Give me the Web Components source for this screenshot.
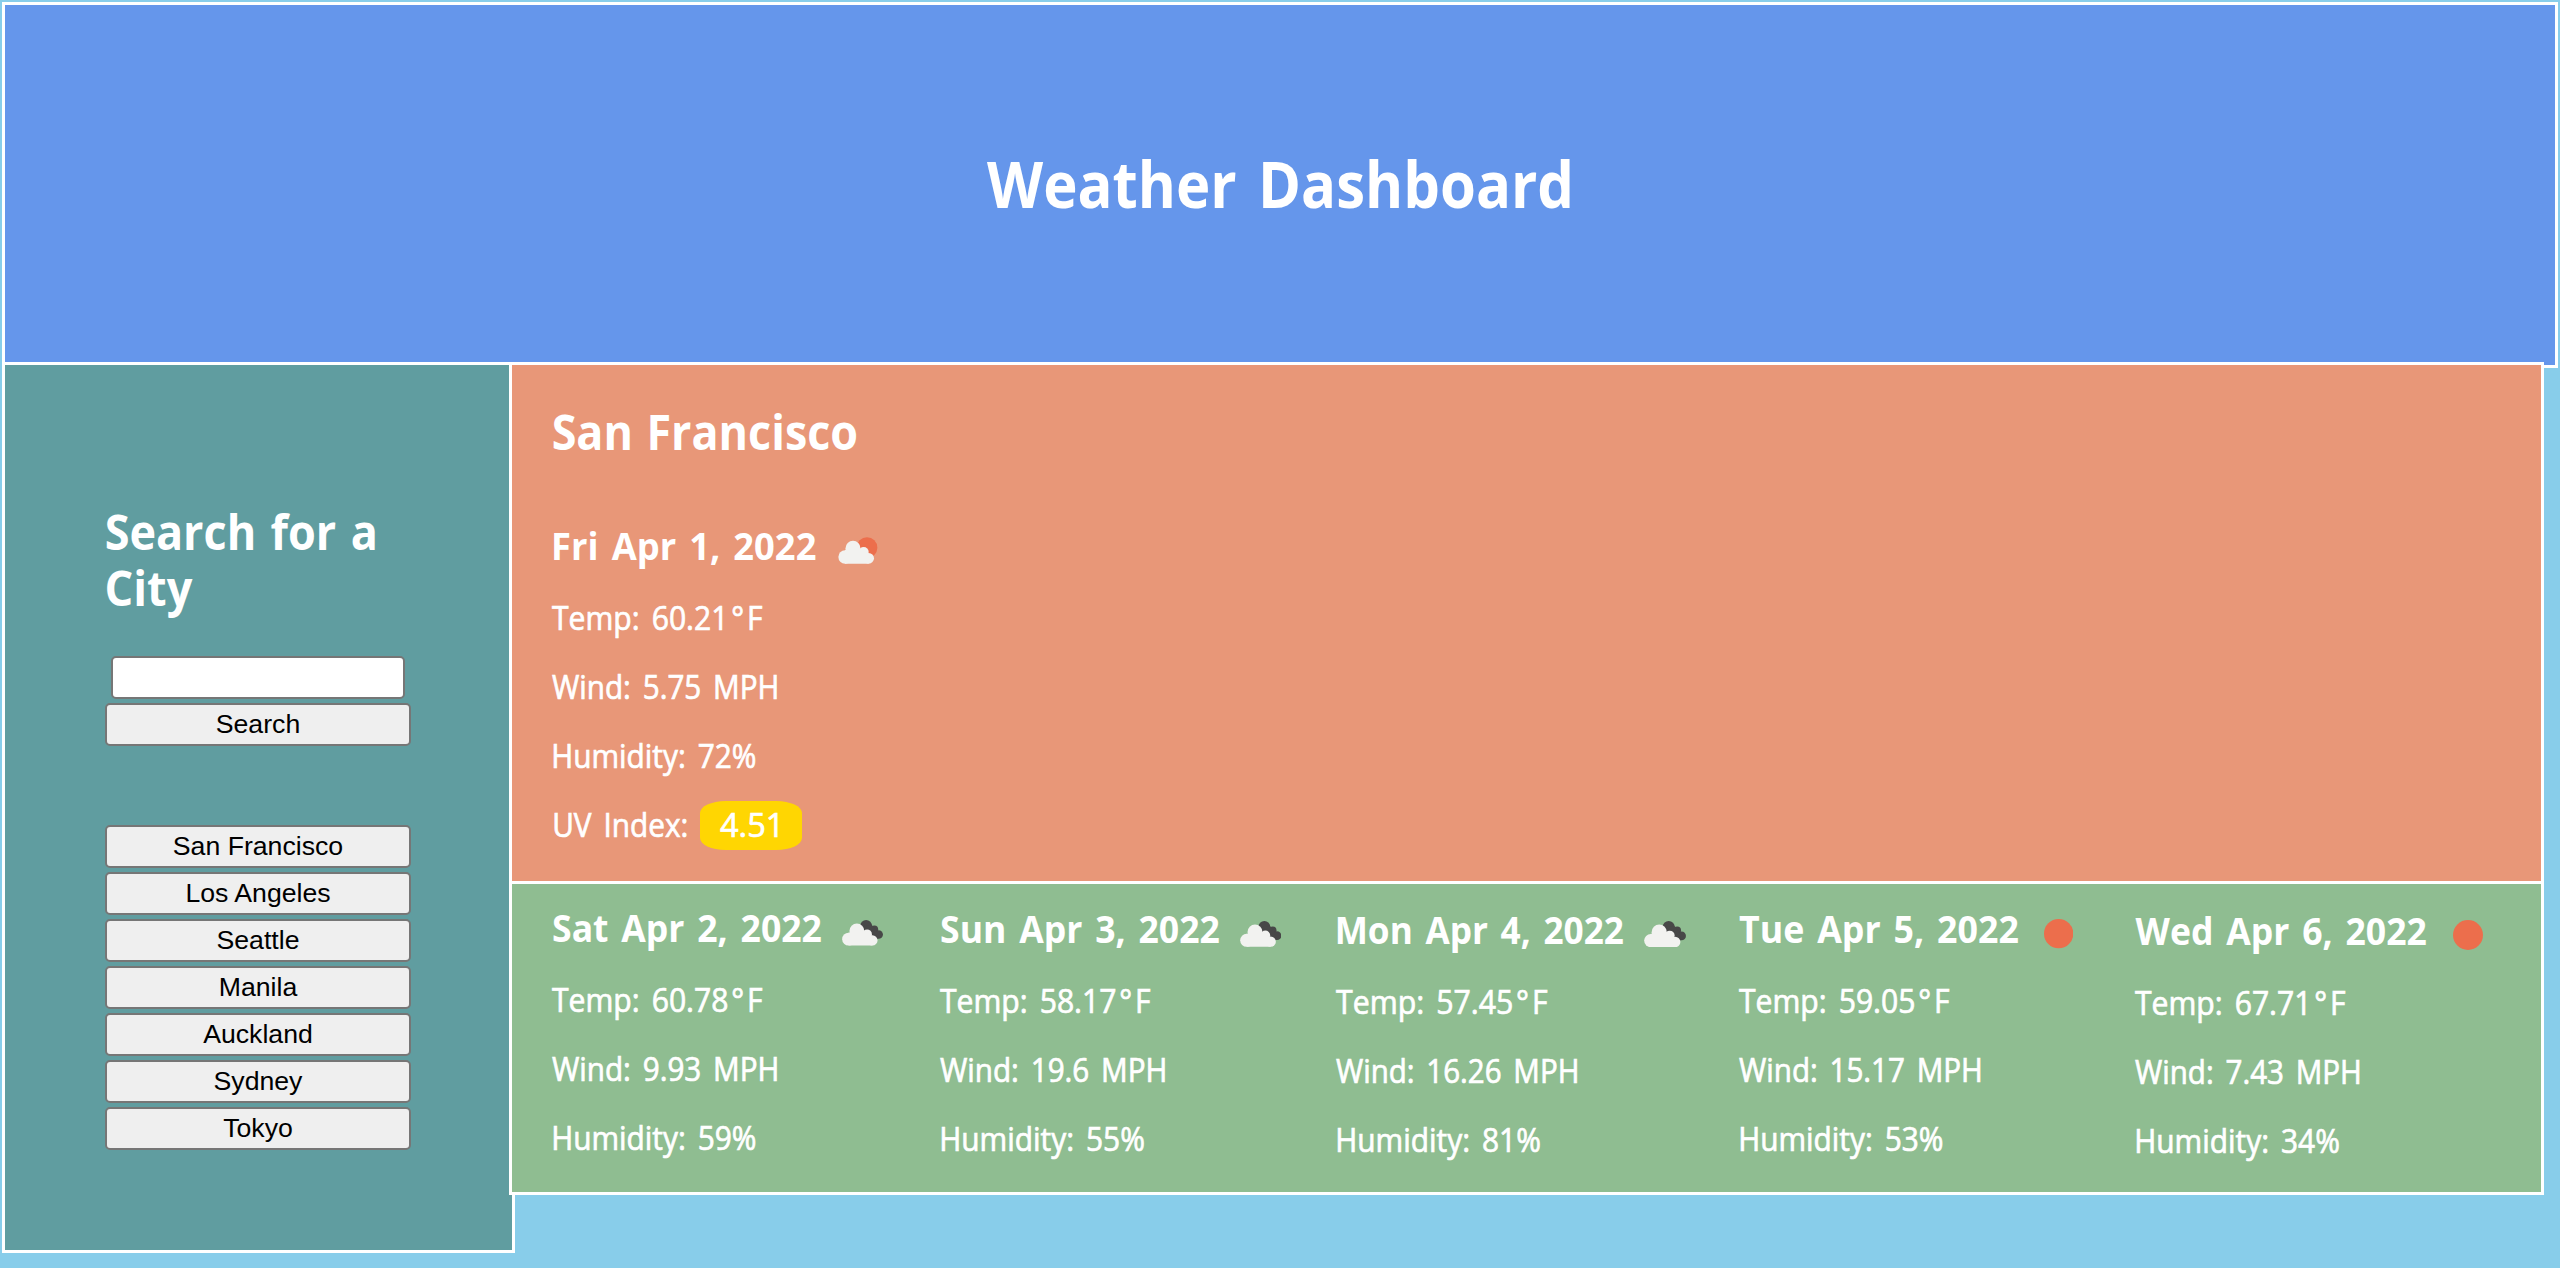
<!DOCTYPE html>
<html lang="en">
<head>
<meta charset="utf-8">
<title>Weather Dashboard</title>
<style>
html, body { margin: 0; }
body { background: #88cdea; padding: 2px; box-sizing: border-box; height: 1268px; overflow: hidden; color: #fff; font-family: "Open Sans", "Noto Sans", sans-serif; }
</style>
</head>
<body>
<weather-app></weather-app>
<script>
const shadow = (el, html) => { const r = el.attachShadow({ mode: 'open' }); r.innerHTML = html; return r; };
const pen = document.createElement('canvas').getContext('2d');

/* One line of text whose glyphs span exactly `ink` pixels, starting `lead` pixels in. */
class FitText extends HTMLElement {
  connectedCallback() {
    const r = shadow(this, `<style>
      :host { display: block; flex: none; white-space: nowrap; word-spacing: var(--gap, 0.11em); }
      span { display: block; width: max-content; transform-origin: 0 0; }
    </style><span><slot></slot></span>`);
    const cs = getComputedStyle(this), line = r.querySelector('span');
    pen.font = `${cs.fontWeight} ${cs.fontSize} ${cs.fontFamily}`;
    const m = pen.measureText(this.textContent);
    const bearings = m.width - m.actualBoundingBoxLeft - m.actualBoundingBoxRight;
    const ink = +this.getAttribute('ink'), lead = +(this.getAttribute('lead') || 0);
    const k = ink / (line.getBoundingClientRect().width - bearings);
    this.style.width = ink + lead + 'px';
    line.style.transform = `translateX(${lead + m.actualBoundingBoxLeft * k}px) scaleX(${k})`;
  }
}
customElements.define('fit-text', FitText);

class WeatherIcon extends HTMLElement {
  connectedCallback() {
    const w = this.getAttribute('width');
    const art = {
      partly: `<svg viewBox="54 50 119 81" width="${w}">
        <circle cx="141" cy="82" r="31" fill="#ec6e4c"/>
        <g fill="#f2f2f0"><circle cx="75" cy="110" r="20"/><circle cx="99" cy="84" r="22.5"/><circle cx="131" cy="95" r="15"/><circle cx="146" cy="114" r="16"/><path d="M75 130V88H122L146 100V130Z"/></g></svg>`,
      clouds: `<svg viewBox="48 46 125 78" width="${w}">
        <g fill="#484848"><circle cx="121" cy="64" r="18"/><circle cx="146" cy="74" r="11.5"/><circle cx="159" cy="90" r="13"/><path d="M115 64L137 60L150 76L158 103H120Z"/></g>
        <g fill="#f2f2f0"><circle cx="68" cy="104" r="19.5"/><circle cx="93" cy="79" r="22.5"/><circle cx="124" cy="89" r="14.5"/><circle cx="140" cy="108" r="15.5"/><path d="M68 123.5V84H115L140 94V123.5Z"/></g></svg>`,
      sun: `<svg viewBox="0 0 30 30" width="${w}"><circle cx="15" cy="15" r="15" fill="#ec6e4c"/></svg>`
    }[this.getAttribute('kind')];
    shadow(this, `<style>:host { display: block; flex: none; } svg { display: block; }</style>${art}`);
  }
}
customElements.define('weather-icon', WeatherIcon);

class DayReport extends HTMLElement {
  connectedCallback() {
    const d = JSON.parse(this.getAttribute('data'));
    shadow(this, `<style>
      :host { display: block; font-size: 32px; line-height: 69px; -webkit-text-stroke: 0.7px #fff; --gap: 0.14em; }
      .date { display: flex; align-items: flex-start; height: 51px; margin-bottom: 12px; font-size: 37.44px; line-height: 51px; font-weight: 700; -webkit-text-stroke: 0; --gap: 0.1em; }
      .degree { padding: 0 3px; }
      weather-icon { margin: ${d.icon[3]}px 0 0 ${d.icon[2]}px; }
    </style>
    <div class="date"><fit-text lead="${d.date[2]}" ink="${d.date[1]}">${d.date[0]}</fit-text><weather-icon kind="${d.icon[0]}" width="${d.icon[1]}"></weather-icon></div>
    ${d.rows.map(([t, ink, lead]) => `<fit-text lead="${lead}" ink="${ink}">${t.replace('°', '<span class="degree">°</span>')}</fit-text>`).join('')}
    <slot></slot>`);
  }
}
customElements.define('day-report', DayReport);

class UvIndex extends HTMLElement {
  connectedCallback() {
    shadow(this, `<style>
      :host { display: flex; align-items: flex-start; height: 69px; }
      .badge { box-sizing: border-box; width: 102px; height: 49px; margin: 11px 0 0 13px; padding-left: 20px; line-height: 47px; border-radius: 25%; background: #ffd602; }
    </style>
    <fit-text lead="2" ink="133">UV Index:</fit-text><div class="badge"><fit-text ink="58">4.51</fit-text></div>`);
  }
}
customElements.define('uv-index', UvIndex);

class AppHeader extends HTMLElement {
  connectedCallback() {
    shadow(this, `<style>
      :host { display: flex; justify-content: center; box-sizing: border-box; height: 366px; padding-top: 135px; border: 3px solid #fff; background: #6596eb; }
      h1 { margin: 0 3px 0 0; font-size: 64px; line-height: 87px; font-weight: 700; }
    </style><h1><fit-text ink="583">Weather Dashboard</fit-text></h1>`);
  }
}
customElements.define('app-header', AppHeader);

class CityButton extends HTMLElement {
  connectedCallback() {
    shadow(this, `<style>
      :host { display: block; }
      button { display: block; width: 306px; height: 43px; box-sizing: border-box; margin: 0; padding: 0; border: 2px solid #767676; border-radius: 5px; background: #efefef; color: #000; font: 26.667px "Liberation Sans", Arial, sans-serif; }
    </style><button><slot></slot></button>`);
  }
}
customElements.define('city-button', CityButton);

class CitySearch extends HTMLElement {
  connectedCallback() {
    const cities = ['San Francisco', 'Los Angeles', 'Seattle', 'Manila', 'Auckland', 'Sydney', 'Tokyo'];
    shadow(this, `<style>
      :host { display: block; box-sizing: border-box; flex: none; width: 513px; height: 891px; padding: 139px 0 0 100px; border: 3px solid #fff; background: #609da0; --gap: 0.06em; }
      h2 { margin: 0 0 40px; font-size: 48px; line-height: 56px; font-weight: 700; }
      input { display: block; box-sizing: border-box; width: 294px; height: 43px; margin: 0 0 4px 6px; border: 2px solid #767676; border-radius: 5px; background: #fff; }
      .cities { display: flex; flex-direction: column; gap: 4px; margin-top: 79px; }
    </style>
    <h2><fit-text lead="1.5" ink="268.5">Search for a</fit-text><fit-text lead="1.5" ink="86.5">City</fit-text></h2>
    <input type="text" aria-label="City"><city-button>Search</city-button>
    <div class="cities">${cities.map(c => `<city-button>${c}</city-button>`).join('')}</div>`);
  }
}
customElements.define('city-search', CitySearch);

class CurrentWeather extends HTMLElement {
  connectedCallback() {
    const data = { date: ['Fri Apr 1, 2022', 262, 2], icon: ['partly', 39.7, 22, 16.7],
      rows: [['Temp: 60.21°F', 210, 0], ['Wind: 5.75 MPH', 225, 0], ['Humidity: 72%', 201, 2]] };
    shadow(this, `<style>
      :host { display: block; box-sizing: border-box; height: 522px; padding: 34px 0 0 40px; border: 3px solid #fff; background: #e89778; --gap: 0.04em; }
      h2 { margin: 0 0 56px; font-size: 48px; line-height: 65px; font-weight: 700; }
    </style>
    <h2><fit-text lead="1.5" ink="303">San Francisco</fit-text></h2>
    <day-report data='${JSON.stringify(data)}'><uv-index></uv-index></day-report>`);
  }
}
customElements.define('current-weather', CurrentWeather);

class WeatherForecast extends HTMLElement {
  connectedCallback() {
    const days = [
      { top: 0, date: ['Sat Apr 2, 2022', 268.5, 1], icon: ['clouds', 41.3, 20, 18.3], rows: [['Temp: 60.78°F', 210, 0], ['Wind: 9.93 MPH', 225, 0], ['Humidity: 59%', 201, 2]] },
      { top: 1, date: ['Sun Apr 3, 2022', 278.5, 1], icon: ['clouds', 41.7, 20, 17.7], rows: [['Temp: 58.17°F', 210, 0], ['Wind: 19.6 MPH', 225, 0], ['Humidity: 55%', 201.5, 2]] },
      { top: 2, date: ['Mon Apr 4, 2022', 286, 1.5], icon: ['clouds', 42.3, 20.2, 17], rows: [['Temp: 57.45°F', 211, 0], ['Wind: 16.26 MPH', 241, 0], ['Humidity: 81%', 201.5, 2]] },
      { top: 1, date: ['Tue Apr 5, 2022', 279.5, 0], icon: ['sun', 29.3, 25.7, 16.3], rows: [['Temp: 59.05°F', 210, 0], ['Wind: 15.17 MPH', 241.5, 0], ['Humidity: 53%', 201, 2]] },
      { top: 3, date: ['Wed Apr 6, 2022', 291, 0.5], icon: ['sun', 30, 26.2, 15], rows: [['Temp: 67.71°F', 210, 0], ['Wind: 7.43 MPH', 224.5, 0], ['Humidity: 34%', 201.5, 2]] }
    ];
    shadow(this, `<style>
      :host { display: grid; grid-template-columns: 388px 396px 403px 396px 1fr; align-items: start; box-sizing: border-box; height: 314px; margin-top: -3px; padding: 18px 0 0 40px; border: 3px solid #fff; background: #8fbd91; }
    </style>${days.map(d => `<day-report style="margin-top:${d.top}px" data='${JSON.stringify(d)}'></day-report>`).join('')}`);
  }
}
customElements.define('weather-forecast', WeatherForecast);

class WeatherApp extends HTMLElement {
  connectedCallback() {
    shadow(this, `<style>
      :host { display: block; }
      .body { display: flex; align-items: flex-start; margin-top: -6px; }
      main { flex: none; width: 2035px; margin-left: -6px; }
    </style>
    <app-header></app-header>
    <div class="body"><city-search></city-search><main><current-weather></current-weather><weather-forecast></weather-forecast></main></div>`);
  }
}
customElements.define('weather-app', WeatherApp);
</script>
</body>
</html>
